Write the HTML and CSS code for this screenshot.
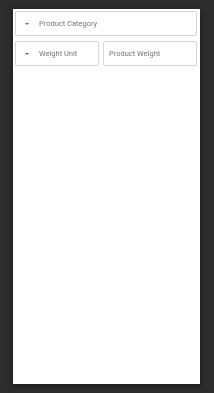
FILE: index.html
```html
<!DOCTYPE html>
<html>
<head>
<meta charset="utf-8">
<link rel="stylesheet" href="styles.css">
</head>
<body>
<div class="card">
  <div class="field select">
    <span class="arrow"></span>
    <span class="label">Product Category</span>
  </div>
  <div class="row">
    <div class="field select unit">
      <span class="arrow"></span>
      <span class="label">Weight Unit</span>
    </div>
    <div class="field weight">
      <span class="label">Product Weight</span>
    </div>
  </div>
</div>
</body>
</html>
```
FILE: styles.css
```css
html, body {
  margin: 0;
  padding: 0;
  background: #2c2d2f;
  height: 100%;
}
body {
  padding-top: 9px;
  box-sizing: border-box;
  font-family: Roboto, "Noto Sans", sans-serif;
}
.card {
  margin-left: 13px;
  width: 187px;
  height: 375px;
  background: #ffffff;
  box-sizing: border-box;
  padding: 2px 3px 0 2px;
  box-shadow: 0 2px 6px rgba(0,0,0,0.5);
  display: flex;
  flex-direction: column;
  gap: 5px;
}
.field {
  height: 25px;
  box-sizing: border-box;
  border: 1px solid #d4d4d4;
  border-radius: 2px;
  display: flex;
  align-items: center;
  font-size: 7.5px;
  color: #757575;
}
.label {
  display: inline-block;
  opacity: 0.99;
  will-change: transform;
}
.select {
  padding-left: 9px;
}
.arrow {
  width: 0;
  height: 0;
  border-left: 2.5px solid transparent;
  border-right: 2.5px solid transparent;
  border-top: 2.5px solid #666;
  margin-right: 10px;
}
.row {
  display: flex;
  gap: 4px;
}
.unit {
  width: 84px;
}
.weight {
  flex: 1;
  padding-left: 5px;
}
```
